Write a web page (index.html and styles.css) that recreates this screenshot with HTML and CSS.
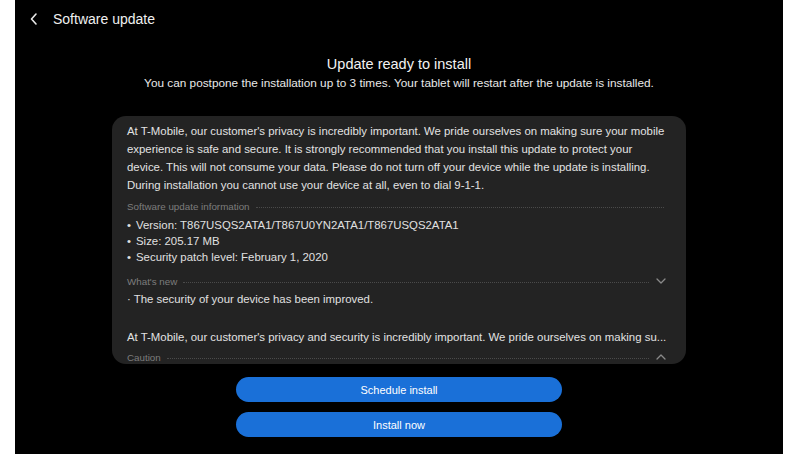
FILE: index.html
```html
<!DOCTYPE html>
<html>
<head>
<meta charset="utf-8">
<link rel="stylesheet" href="styles.css">
</head>
<body>
<div class="screen">
  <div class="header">
    <svg class="back" width="10" height="14" viewBox="0 0 10 14"><path d="M7 2 L2.5 7 L7 12" fill="none" stroke="#e8e8e8" stroke-width="1.6" stroke-linecap="round" stroke-linejoin="round"/></svg>
    <span class="htitle">Software update</span>
  </div>
  <div class="title">Update ready to install</div>
  <div class="subtitle">You can postpone the installation up to 3 times. Your tablet will restart after the update is installed.</div>
  <div class="card">
    <p class="para">At T-Mobile, our customer's privacy is incredibly important. We pride ourselves on making sure your mobile<br>experience is safe and secure. It is strongly recommended that you install this update to protect your<br>device. This will not consume your data. Please do not turn off your device while the update is installing.<br>During installation you cannot use your device at all, even to dial 9-1-1.</p>
    <div class="label"><span>Software update information</span><i class="dots"></i></div>
    <ul class="list">
      <li>Version: T867USQS2ATA1/T867U0YN2ATA1/T867USQS2ATA1</li>
      <li>Size: 205.17 MB</li>
      <li>Security patch level: February 1, 2020</li>
    </ul>
    <div class="label"><span>What's new</span><i class="dots"></i>
      <svg class="chev" width="12" height="8" viewBox="0 0 12 8"><path d="M2 2 L6 6 L10 2" fill="none" stroke="#8a8a8a" stroke-width="1.3" stroke-linecap="round" stroke-linejoin="round"/></svg>
    </div>
    <div class="item">· The security of your device has been improved.</div>
    <div class="para2">At T-Mobile, our customer's privacy and security is incredibly important. We pride ourselves on making su...</div>
    <div class="label"><span>Caution</span><i class="dots"></i>
      <svg class="chev" width="12" height="8" viewBox="0 0 12 8"><path d="M2 6 L6 2 L10 6" fill="none" stroke="#8a8a8a" stroke-width="1.3" stroke-linecap="round" stroke-linejoin="round"/></svg>
    </div>
  </div>
  <div class="btn btn1">Schedule install</div>
  <div class="btn btn2">Install now</div>
</div>
</body>
</html>
```
FILE: styles.css
```css
html, body {
  margin: 0;
  padding: 0;
  background: #ffffff;
}
.screen {
  margin: 0 17px 0 15px;
  height: 454px;
  background: #000000;
  display: flex;
  flex-direction: column;
  align-items: center;
  font-family: "Liberation Sans", Arial, sans-serif;
  color: #e6e6e6;
  overflow: hidden;
}
.header {
  align-self: stretch;
  display: flex;
  align-items: center;
  height: 20px;
  margin-top: 9px;
  padding-left: 14px;
}
.back {
  margin-right: 14px;
}
.htitle {
  font-size: 14px;
  color: #f0f0f0;
}
.title {
  margin-top: 26px;
  font-size: 14.5px;
  line-height: 18px;
  color: #f2f2f2;
}
.subtitle {
  margin-top: 2px;
  font-size: 11.8px;
  line-height: 16px;
  color: #e8e8e8;
  white-space: nowrap;
}
.card {
  margin-top: 25px;
  width: 574px;
  height: 248px;
  box-sizing: border-box;
  padding: 6px 16px 0 15px;
  background: #232323;
  border-radius: 14px;
  overflow: hidden;
}
.para {
  margin: 0;
  font-size: 11.4px;
  line-height: 18px;
  color: #e2e2e2;
  white-space: nowrap;
}
.label {
  display: flex;
  align-items: center;
  height: 14px;
  font-size: 9.8px;
  color: #7d7d7d;
  margin-top: 5px;
}
.label span {
  white-space: nowrap;
}
.dots {
  flex: 1;
  height: 0;
  border-top: 1px dotted #4a4a4a;
  margin: 2px 6px 0 6px;
}
.chev {
  margin-right: 3px;
}
.list {
  list-style: none;
  margin: 4px 0 0 0;
  padding: 0;
}
.list li {
  font-size: 11.4px;
  line-height: 16px;
  color: #e0e0e0;
}
.list li::before {
  content: "•";
  margin-right: 5px;
}
.list + .label {
  margin-top: 9px;
}
.item {
  margin-top: 3px;
  font-size: 11.4px;
  line-height: 16px;
  color: #e0e0e0;
}
.para2 {
  margin-top: 21px;
  font-size: 11.4px;
  line-height: 18px;
  color: #e2e2e2;
  white-space: nowrap;
}
.para2 + .label {
  margin-top: 4px;
}
.btn {
  width: 326px;
  height: 25px;
  border-radius: 12.5px;
  background: #1a70d8;
  color: #ffffff;
  font-size: 11px;
  display: flex;
  align-items: center;
  justify-content: center;
}
.btn1 {
  margin-top: 13px;
}
.btn2 {
  margin-top: 10px;
}
```
